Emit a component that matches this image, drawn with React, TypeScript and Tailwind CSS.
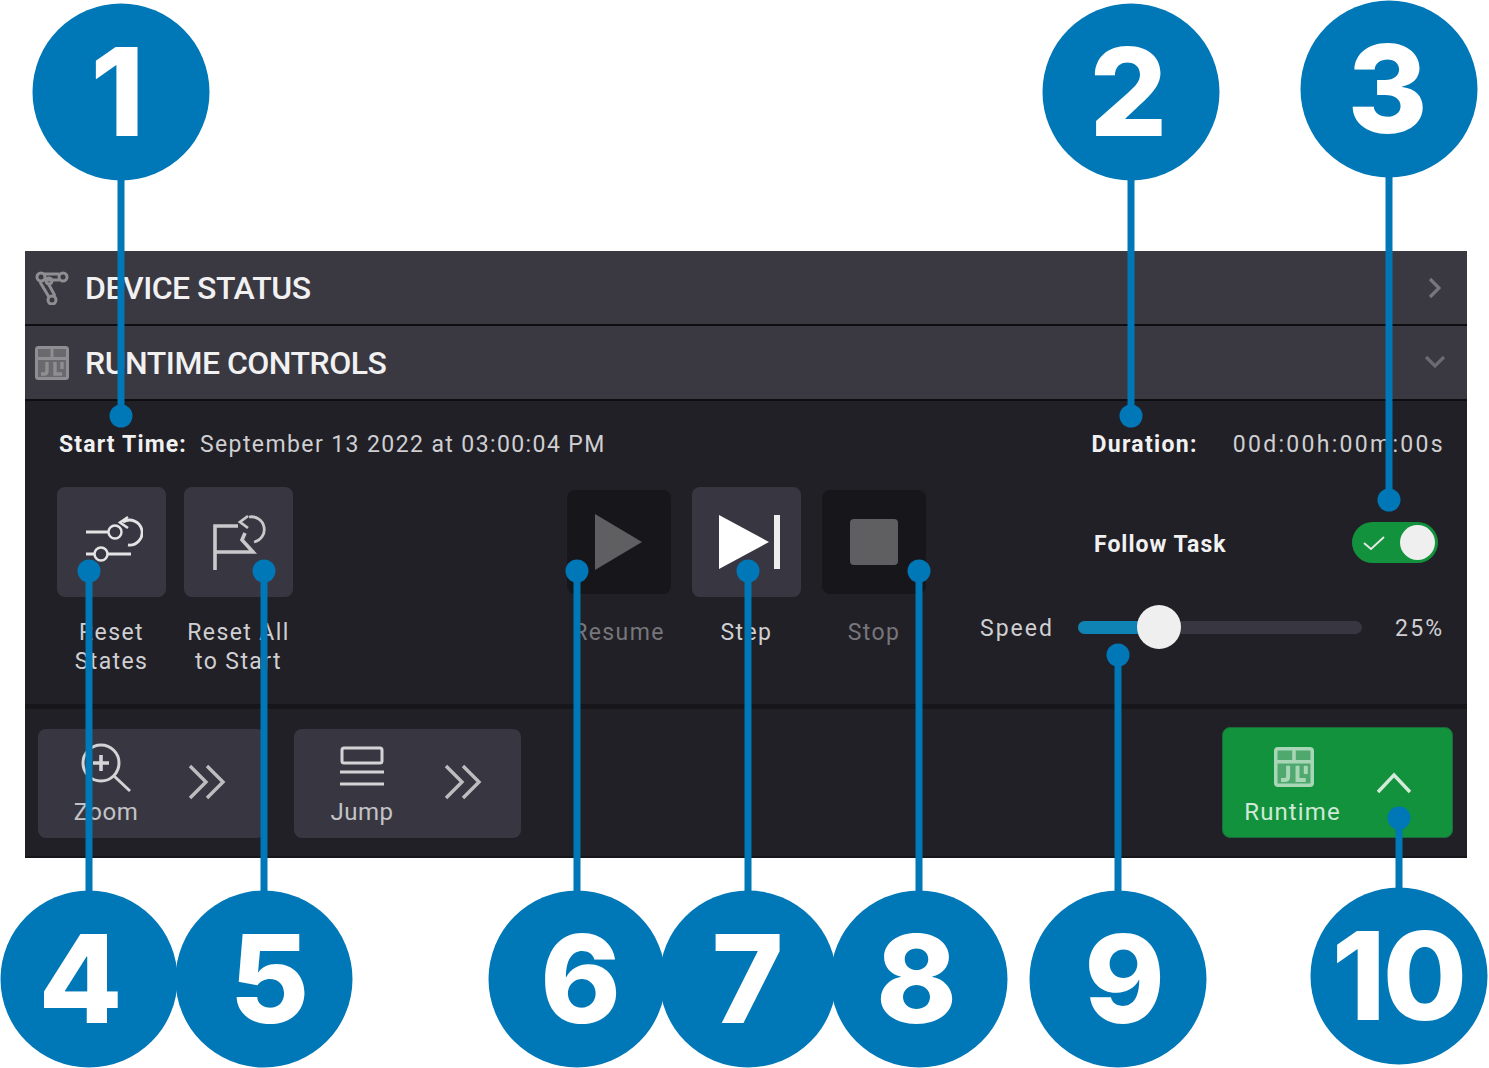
const callouts = [
  { n: "1", cx: 121, cy: 92, tx: 116, dot: 416 },
  { n: "2", cx: 1131, cy: 92, tx: 1127, dot: 416 },
  { n: "3", cx: 1389, cy: 89, tx: 1386, dot: 500 },
  { n: "4", cx: 89, cy: 979, tx: 79, dot: 571 },
  { n: "5", cx: 264, cy: 979, tx: 268, dot: 571 },
  { n: "6", cx: 577, cy: 979, tx: 579, dot: 571 },
  { n: "7", cx: 748, cy: 979, tx: 746, dot: 571 },
  { n: "8", cx: 919, cy: 979, tx: 915, dot: 571 },
  { n: "9", cx: 1118, cy: 979, tx: 1123, dot: 655 },
  { n: "10", cx: 1399, cy: 976, tx: 1398, dot: 818 },
]

const Callout = ({ n, cx, cy, tx, dot }: (typeof callouts)[number]) => {
  const top = Math.min(cy, dot)
  const height = Math.abs(cy - dot)
  return (
    <>
      <div className="absolute w-[7px] -translate-x-1/2 bg-[#0077b6]" style={{ left: cx, top, height }} />
      <div className="absolute h-[23px] w-[23px] -translate-x-1/2 -translate-y-1/2 rounded-full bg-[#0077b6]" style={{ left: cx, top: dot }} />
      <div className="absolute h-[177px] w-[177px] -translate-x-1/2 -translate-y-1/2 rounded-full bg-[#0077b6]" style={{ left: cx, top: cy }} />
      <div
        className="absolute -translate-x-1/2 -translate-y-1/2 text-[122px] leading-none font-extrabold tracking-[-3px] text-white [font-family:Inter,sans-serif]"
        style={{ left: tx, top: cy }}
      >
        {n}
      </div>
    </>
  )
}

const DeviceIcon = () => (
  <svg width="34" height="34" viewBox="0 0 34 34" fill="none" stroke="#8f8e92" strokeWidth="3">
    <circle cx="6" cy="6" r="4" />
    <circle cx="14" cy="10" r="3" />
    <circle cx="28" cy="6" r="4" />
    <circle cx="17" cy="29" r="4" />
    <path d="M9 3h15M10 9h14M5 11l9 15M13 12l7 13" />
  </svg>
)

const RuntimeIcon = ({ color = "#8f8e92", fill = "#6a696e", size = 34 }: { color?: string; fill?: string; size?: number }) => (
  <svg width={size} height={size} viewBox="0 0 34 34" fill="none" stroke={color} strokeWidth="3">
    <rect x="1.5" y="1.5" width="31" height="31" rx="2" fill={fill} />
    <path d="M1.5 12.5h31M17 1.5v11" />
    <path d="M12 16v9q0 3-3 3H6M20 16v12h7" strokeWidth="3.4" />
    <path d="M27 16v7" strokeWidth="3.4" />
  </svg>
)

const ResetStatesIcon = () => (
  <svg width="62" height="54" viewBox="0 0 62 54" fill="none" stroke="#e4e4e6" strokeWidth="3">
    <path d="M5 17h22" />
    <circle cx="34" cy="17" r="6.5" strokeWidth="2.4" />
    <path d="M42 7A12.5 12.5 0 1 1 47 30" strokeWidth="2.8" />
    <path d="M47 2l-8 5.5 8 5.5" strokeWidth="2.6" />
    <path d="M5 39h9M27 39h23" />
    <circle cx="20" cy="39" r="6.5" strokeWidth="2.5" />
  </svg>
)

const ResetAllIcon = () => (
  <svg width="58" height="58" viewBox="0 0 58 58" fill="none" stroke="#c9c9cc">
    <path d="M5 57V13h23M5 39h38l-11-12 3-7" strokeWidth="3.6" />
    <path d="M39 4A12.5 12.5 0 1 1 44 29" strokeWidth="2.8" />
    <path d="M38 3l-8 6 8 6" strokeWidth="2.8" />
  </svg>
)

const ZoomIcon = () => (
  <svg width="50" height="50" viewBox="0 0 50 50" fill="none" stroke="#d4d4d6" strokeWidth="3">
    <circle cx="20" cy="20" r="18" />
    <path d="M33 33l16 15" />
    <path d="M20 12v16M12 20h16" strokeWidth="3.6" />
  </svg>
)

const JumpIcon = () => (
  <svg width="44" height="44" viewBox="0 0 44 44" fill="none" stroke="#d4d4d6" strokeWidth="3">
    <rect x="2" y="2" width="40" height="15" rx="2" />
    <path d="M0 26h44M0 38h44" />
  </svg>
)

const DoubleChevron = () => (
  <svg width="40" height="36" viewBox="0 0 40 36" fill="none" stroke="#bdbdc0" strokeWidth="3.4" className="mb-[3px] ml-[13px]">
    <path d="M3 2l16 16L3 34M20 2l16 16L20 34" />
  </svg>
)

const ActionButton = ({ lines, icon, dark }: { lines: string[]; icon: React.ReactNode; dark?: boolean }) => (
  <div className="flex flex-col items-center">
    <div className={dark
      ? "my-[3px] flex h-[104px] w-[104px] items-center justify-center rounded-[8px] bg-[#17161b]"
      : "flex h-[110px] w-[109px] items-center justify-center rounded-[8px] bg-[#383741]"}>
      {icon}
    </div>
    <div className={`mt-[21px] text-center text-[23px] leading-[29px] tracking-[1.4px] whitespace-nowrap ${dark ? "text-[#77767b]" : "text-[#cfcfd2]"}`}>
      {lines.map((l) => <div key={l}>{l}</div>)}
    </div>
  </div>
)

const Row = ({ title, icon, chevron }: { title: string; icon: React.ReactNode; chevron: React.ReactNode }) => (
  <div className="flex h-[75px] items-center justify-between border-b-2 border-[#0e0d10] bg-[#3a3841] pr-[18px] pl-[10px]">
    <div className="flex items-center gap-[16px]">
      {icon}
      <span className="text-[32px] leading-none font-medium tracking-[-0.5px] text-[#f1f1f2]">{title}</span>
    </div>
    {chevron}
  </div>
)

const FooterButton = ({ label, icon, className }: { label: string; icon: React.ReactNode; className: string }) => (
  <div className={`flex h-[109px] w-[227px] items-center rounded-[8px] bg-[#383741] ${className}`}>
    <div className="flex w-[136px] flex-col items-center">
      <div className="mt-[2px] flex h-[52px] items-center">{icon}</div>
      <span className="mt-[3px] text-[24px] leading-[30px] tracking-[0.5px] text-[#c3c3c6]">{label}</span>
    </div>
    <DoubleChevron />
  </div>
)

const App = () => {
  return (
    <div className="relative h-[1068px] w-[1489px] overflow-hidden bg-white [font-family:Roboto,sans-serif]">
      <div className="ml-[25px] w-[1442px] pt-[251px]">
        <Row
          title="DEVICE STATUS"
          icon={<DeviceIcon />}
          chevron={
            <svg width="14" height="22" viewBox="0 0 14 22" fill="none" stroke="#77767b" strokeWidth="3.2" className="mr-[8px]"><path d="M3 2l9 9-9 9" /></svg>
          }
        />
        <Row
          title="RUNTIME CONTROLS"
          icon={<RuntimeIcon />}
          chevron={
            <svg width="22" height="14" viewBox="0 0 22 14" fill="none" stroke="#6b6a70" strokeWidth="3.2" className="mr-[3px] mb-[3px]"><path d="M2 3l9 9 9-9" /></svg>
          }
        />

        <div className="h-[303px] bg-[#212026] pt-[30px] pr-[22px] pl-[34px]">
          <div className="flex h-[28px] items-center justify-between text-[23px] text-[#cfcfd2]">
            <div className="flex gap-[13px]">
              <span className="font-bold tracking-[1.15px] text-[#f1f1f2]">Start Time:</span>
              <span className="tracking-[1.4px]">September 13 2022 at 03:00:04 PM</span>
            </div>
            <div className="flex gap-[35px]">
              <span className="font-bold tracking-[1.3px] text-[#f1f1f2]">Duration:</span>
              <span className="tracking-[2.3px]">00d:00h:00m:00s</span>
            </div>
          </div>

          <div className="mt-[28px] flex">
            <div className="-ml-[2px] flex gap-[18px]">
              <ActionButton lines={["Reset", "States"]} icon={<ResetStatesIcon />} />
              <ActionButton lines={["Reset All", "to Start"]} icon={<ResetAllIcon />} />
            </div>

            <div className="ml-[274px] flex w-[359px] justify-between">
              <ActionButton lines={["Resume"]} dark icon={
                <svg width="50" height="56" viewBox="0 0 50 56"><path d="M1 0l47 28L1 56z" fill="#5f5f62" /></svg>
              } />
              <ActionButton lines={["Step"]} icon={
                <svg width="66" height="56" viewBox="0 0 66 56" fill="#fff"><path d="M5 1l50 27L5 55z" /><path d="M60 1h6v54h-6z" fill="#eeeeef" /></svg>
              } />
              <ActionButton lines={["Stop"]} dark icon={<div className="h-[46px] w-[48px] rounded-[4px] bg-[#5f5f62]" />} />
            </div>

            <div className="ml-[54px] flex w-[465px] flex-col">
              <div className="mt-[35px] ml-[114px] flex h-[41px] items-center justify-between pr-[7px]">
                <span className="mt-[5px] text-[23px] font-bold tracking-[1px] text-[#f1f1f2]">Follow Task</span>
                <div className="flex h-[41px] w-[86px] items-center justify-between rounded-full bg-[#12923c] pr-[3px] pl-[10px]">
                  <svg width="24" height="24" viewBox="0 0 24 24" fill="none" stroke="#e8e8e8" strokeWidth="1.8"><path d="M2 12l7 6L22 6" /></svg>
                  <div className="h-[35px] w-[35px] rounded-full bg-[#efefef]" />
                </div>
              </div>
              <div className="mt-[42px] flex h-[44px] items-center">
                <span className="mt-[5px] w-[98px] text-[23px] tracking-[2px] text-[#cfcfd2]">Speed</span>
                <div className="relative h-[13px] w-[284px] rounded-full bg-[#383741]">
                  <div className="h-full w-[82px] rounded-l-full bg-[#0f84b4]" />
                  <div className="absolute top-1/2 left-[59px] h-[44px] w-[44px] -translate-y-1/2 rounded-full bg-[#efefef]" />
                </div>
                <span className="mt-[5px] ml-[33px] text-[23px] tracking-[2.2px] text-[#cfcfd2]">25%</span>
              </div>
            </div>
          </div>
        </div>

        <div className="flex h-[154px] items-center border-t-[5px] border-b-2 border-t-[#17161a] border-b-[#17161a] bg-[#212026] pt-[2px] pr-[14px] pl-[13px]">
          <FooterButton label="Zoom" icon={<ZoomIcon />} className="" />
          <FooterButton label="Jump" icon={<JumpIcon />} className="ml-[29px]" />
          <div className="mb-[2px] ml-auto flex h-[111px] w-[231px] items-center rounded-[8px] border border-[#1a6a3c] bg-[#12923c]">
            <div className="flex w-[139px] flex-col items-center">
              <div className="mt-[2px] ml-[2px] flex h-[52px] items-center"><RuntimeIcon color="#a9d6b6" fill="#4fa96e" size={40} /></div>
              <span className="mt-[4px] text-[24px] leading-[30px] tracking-[1.1px] text-[#cfe9d6]">Runtime</span>
            </div>
            <svg width="36" height="22" viewBox="0 0 36 22" fill="none" stroke="#d4ebda" strokeWidth="3.4" className="ml-[14px]"><path d="M2 20L18 3l16 17" /></svg>
          </div>
        </div>
      </div>

      {callouts.map((c) => <Callout key={c.n} {...c} />)}
    </div>
  )
}

export default App
